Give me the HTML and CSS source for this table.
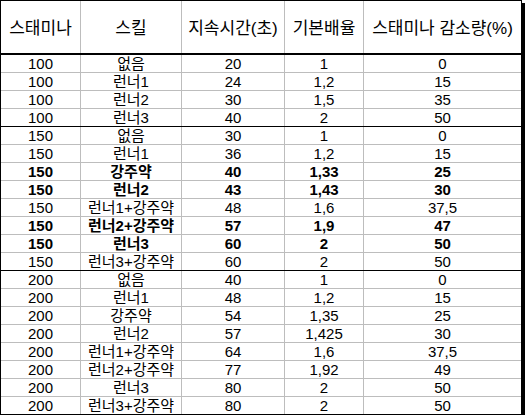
FILE: index.html
```html
<!DOCTYPE html>
<html lang="ko">
<head>
<meta charset="utf-8">
<title>스태미나 표</title>
<link rel="stylesheet" href="styles.css">
</head>
<body>
<div class="sheet">
  <div class="row head">
    <div class="cell">스태미나</div><div class="cell">스킬</div><div class="cell">지속시간(초)</div><div class="cell">기본배율</div><div class="cell">스태미나 감소량(%)</div>
  </div>
  <div class="row"><div class="cell">100</div><div class="cell">없음</div><div class="cell">20</div><div class="cell">1</div><div class="cell">0</div></div>
  <div class="row"><div class="cell">100</div><div class="cell">런너1</div><div class="cell">24</div><div class="cell">1,2</div><div class="cell">15</div></div>
  <div class="row"><div class="cell">100</div><div class="cell">런너2</div><div class="cell">30</div><div class="cell">1,5</div><div class="cell">35</div></div>
  <div class="row end"><div class="cell">100</div><div class="cell">런너3</div><div class="cell">40</div><div class="cell">2</div><div class="cell">50</div></div>
  <div class="row"><div class="cell">150</div><div class="cell">없음</div><div class="cell">30</div><div class="cell">1</div><div class="cell">0</div></div>
  <div class="row"><div class="cell">150</div><div class="cell">런너1</div><div class="cell">36</div><div class="cell">1,2</div><div class="cell">15</div></div>
  <div class="row bold"><div class="cell">150</div><div class="cell">강주약</div><div class="cell">40</div><div class="cell">1,33</div><div class="cell">25</div></div>
  <div class="row bold"><div class="cell">150</div><div class="cell">런너2</div><div class="cell">43</div><div class="cell">1,43</div><div class="cell">30</div></div>
  <div class="row"><div class="cell">150</div><div class="cell">런너1+강주약</div><div class="cell">48</div><div class="cell">1,6</div><div class="cell">37,5</div></div>
  <div class="row bold"><div class="cell">150</div><div class="cell">런너2+강주약</div><div class="cell">57</div><div class="cell">1,9</div><div class="cell">47</div></div>
  <div class="row bold"><div class="cell">150</div><div class="cell">런너3</div><div class="cell">60</div><div class="cell">2</div><div class="cell">50</div></div>
  <div class="row end"><div class="cell">150</div><div class="cell">런너3+강주약</div><div class="cell">60</div><div class="cell">2</div><div class="cell">50</div></div>
  <div class="row"><div class="cell">200</div><div class="cell">없음</div><div class="cell">40</div><div class="cell">1</div><div class="cell">0</div></div>
  <div class="row"><div class="cell">200</div><div class="cell">런너1</div><div class="cell">48</div><div class="cell">1,2</div><div class="cell">15</div></div>
  <div class="row"><div class="cell">200</div><div class="cell">강주약</div><div class="cell">54</div><div class="cell">1,35</div><div class="cell">25</div></div>
  <div class="row"><div class="cell">200</div><div class="cell">런너2</div><div class="cell">57</div><div class="cell">1,425</div><div class="cell">30</div></div>
  <div class="row"><div class="cell">200</div><div class="cell">런너1+강주약</div><div class="cell">64</div><div class="cell">1,6</div><div class="cell">37,5</div></div>
  <div class="row"><div class="cell">200</div><div class="cell">런너2+강주약</div><div class="cell">77</div><div class="cell">1,92</div><div class="cell">49</div></div>
  <div class="row"><div class="cell">200</div><div class="cell">런너3</div><div class="cell">80</div><div class="cell">2</div><div class="cell">50</div></div>
  <div class="row end"><div class="cell">200</div><div class="cell">런너3+강주약</div><div class="cell">80</div><div class="cell">2</div><div class="cell">50</div></div>
</div>
</body>
</html>
```

FILE: styles.css
```css
html, body {
  margin: 0;
  padding: 0;
  background: #ffffff;
}

body {
  font-family: "Liberation Sans", "Noto Sans CJK KR", sans-serif;
  color: #000000;
}

.sheet {
  width: 520px;
  border-top: 1px solid #000000;
  border-left: 1px solid #000000;
  border-right: 1px solid #000000;
  box-shadow: 3px 3px 0 #000000;
}

.row {
  display: grid;
  grid-template-columns: 80px 101px 103px 79px 157px;
  box-sizing: border-box;
  height: 18px;
  border-bottom: 1px solid #bdbdbd;
}

.row.end {
  border-bottom-color: #000000;
}

.cell {
  box-sizing: border-box;
  border-right: 1px solid #bdbdbd;
  font-size: 15px;
  line-height: 17px;
  text-align: center;
  white-space: nowrap;
  overflow: hidden;
}

.cell:last-child {
  border-right: none;
}

.row.bold .cell {
  font-weight: bold;
}

.row.head {
  height: 54px;
  border-bottom: 2px solid #000000;
}

.row.head .cell {
  font-size: 17px;
  line-height: 52px;
  padding-top: 2px;
}
```
